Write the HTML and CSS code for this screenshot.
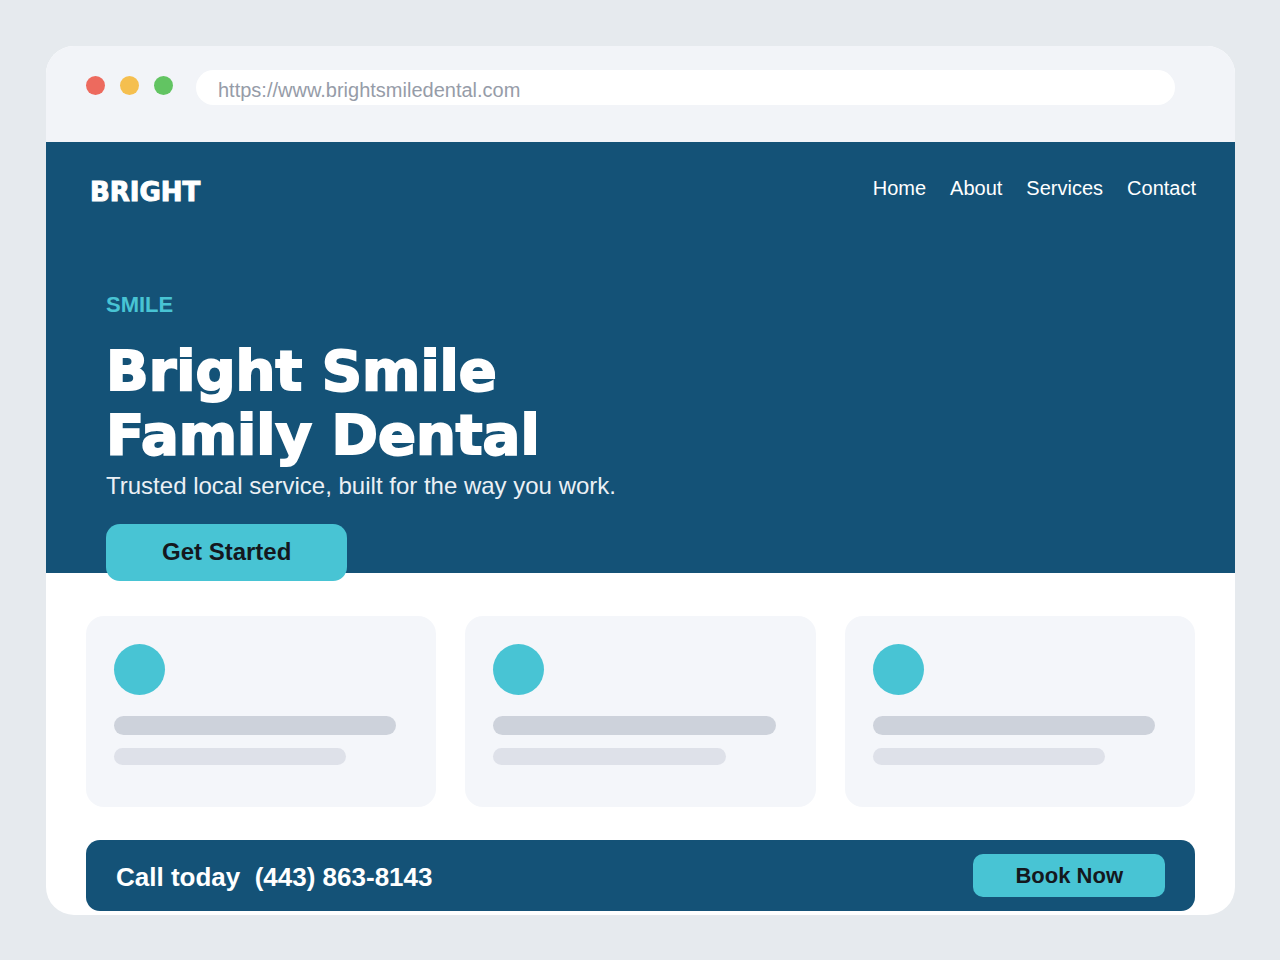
FILE: index.html
```html
<!DOCTYPE html>
<html lang="en">
<head>
<meta charset="utf-8">
<meta name="viewport" content="width=device-width, initial-scale=1">
<title>Bright Smile Family Dental</title>
<link rel="stylesheet" href="styles.css">
</head>
<body>
<div class="window">
  <div class="chrome">
    <div class="dots">
      <span class="dot dot-red"></span>
      <span class="dot dot-yellow"></span>
      <span class="dot dot-green"></span>
    </div>
    <input class="address" type="text" aria-label="Address" value="https://www.brightsmiledental.com">
  </div>
  <div class="hero">
    <header class="site-header">
      <div class="brand">BRIGHT</div>
      <nav class="nav">
        <a href="#">Home</a>
        <a href="#">About</a>
        <a href="#">Services</a>
        <a href="#">Contact</a>
      </nav>
    </header>
    <section class="intro">
      <p class="eyebrow">SMILE</p>
      <h1 class="title">Bright Smile<br>Family Dental</h1>
      <p class="tagline">Trusted local service, built for the way you work.</p>
      <button class="button button-large" type="button">Get Started</button>
    </section>
  </div>
  <main class="content">
    <div class="cards">
      <article class="card"><div class="card-icon"></div><div class="line"></div><div class="line line-short"></div></article>
      <article class="card"><div class="card-icon"></div><div class="line"></div><div class="line line-short"></div></article>
      <article class="card"><div class="card-icon"></div><div class="line"></div><div class="line line-short"></div></article>
    </div>
    <section class="cta">
      <p class="phone">Call today&nbsp; (443) 863-8143</p>
      <button class="button button-small" type="button">Book Now</button>
    </section>
  </main>
</div>
</body>
</html>
```
FILE: styles.css
```css
* {
  box-sizing: border-box;
}

body {
  margin: 0;
  padding: 46px 45px 45px 46px;
  background: #e6eaee;
  font-family: "Liberation Sans", Arial, sans-serif;
}

p,
h1 {
  margin: 0;
}

.window {
  overflow: hidden;
  border-radius: 28px;
  background: #fff;
}

.chrome {
  display: flex;
  align-items: flex-start;
  gap: 23px;
  padding: 24px 60px 37px 40px;
  background: #f2f4f8;
}

.dots {
  display: flex;
  gap: 15px;
  padding-top: 6px;
}

.dot {
  width: 19px;
  height: 19px;
  border-radius: 50%;
}

.dot-red { background: #ed6a5e; }
.dot-yellow { background: #f5bf4f; }
.dot-green { background: #62c462; }

.address {
  flex: 1;
  min-width: 0;
  height: 35px;
  padding: 5px 20px 0 22px;
  border: 0;
  border-radius: 18px;
  background: #fff;
  color: #969ca8;
  font: 20px "Liberation Sans", Arial, sans-serif;
}

.hero {
  background: #145277;
  color: #fff;
}

.site-header {
  display: flex;
  justify-content: space-between;
  align-items: flex-start;
  padding: 33px 39px 0 44px;
}

.brand {
  font: 700 26px/34px "DejaVu Sans", sans-serif;
  -webkit-text-stroke: 1px #fff;
}

.nav {
  display: flex;
  gap: 24px;
  padding-top: 1px;
  font-size: 20px;
  line-height: 24px;
}

.nav a {
  color: inherit;
  text-decoration: none;
}

.intro {
  display: flex;
  flex-direction: column;
  align-items: flex-start;
  padding: 82px 60px 0;
}

.eyebrow {
  color: #48c4d4;
  font-size: 22px;
  font-weight: 700;
  line-height: 28px;
}

.title {
  margin-top: 20px;
  font: 700 56px/64px "DejaVu Sans", sans-serif;
  -webkit-text-stroke: 2px #fff;
}

.tagline {
  margin-top: 5px;
  color: #ebf0f5;
  font-size: 24px;
  line-height: 28px;
}

.button {
  border: 0;
  background: #48c4d4;
  color: #14181e;
  font-family: inherit;
  font-weight: 700;
}

.button-large {
  position: relative;
  margin: 24px 0 -8px;
  padding: 14px 56px 15px;
  border-radius: 14px;
  font-size: 24px;
  line-height: 28px;
}

.content {
  padding: 43px 40px 4px;
}

.cards {
  display: grid;
  grid-template-columns: repeat(3, 1fr);
  gap: 29px;
}

.card {
  padding: 28px 40px 42px 28px;
  border-radius: 18px;
  background: #f4f6fa;
}

.card-icon {
  width: 51px;
  height: 51px;
  border-radius: 50%;
  background: #48c4d4;
}

.line {
  height: 19px;
  margin-top: 21px;
  border-radius: 10px;
  background: #cdd2db;
}

.line-short {
  height: 17px;
  margin: 13px 50px 0 0;
  background: #dee1e9;
}

.cta {
  display: flex;
  justify-content: space-between;
  align-items: center;
  margin-top: 33px;
  padding: 14px 30px;
  border-radius: 14px;
  background: #145277;
  color: #fff;
}

.phone {
  padding-top: 3px;
  font-size: 26px;
  font-weight: 700;
  line-height: 30px;
}

.button-small {
  padding: 9px 42px 8px;
  border-radius: 10px;
  font-size: 22px;
  line-height: 26px;
}
```
